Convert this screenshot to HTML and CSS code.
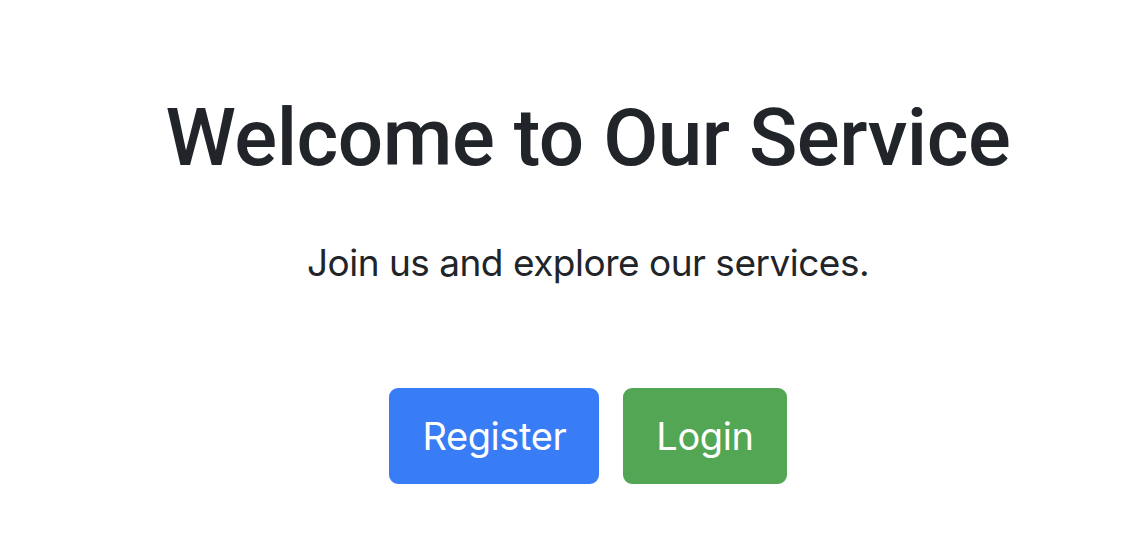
FILE: index.html
```html
<!DOCTYPE html>
<html lang="en">
<head>
<meta charset="utf-8">
<title>Welcome</title>
<link rel="stylesheet" href="styles.css">
</head>
<body>
<main class="hero">
  <h1 class="hero-title">Welcome to Our Service</h1>
  <p class="hero-lead">Join us and explore our services.</p>
  <div class="hero-actions">
    <a class="btn btn-primary" href="#">Register</a>
    <a class="btn btn-success" href="#">Login</a>
  </div>
</main>
</body>
</html>
```

FILE: styles.css
```css
html, body {
  margin: 0;
  padding: 0;
  background: #ffffff;
}
body {
  font-family: Inter, "Noto Sans", "Liberation Sans", sans-serif;
  color: #212529;
}
.hero {
  display: flex;
  flex-direction: column;
  align-items: center;
  padding: 90px 0 0 34px;
}
.hero-title {
  margin: 0;
  font-family: Roboto, "Liberation Sans", sans-serif;
  font-size: 80px;
  font-weight: 500;
  line-height: 96px;
  letter-spacing: -0.5px;
}
.hero-lead {
  margin: 49px 0 0;
  font-size: 37px;
  font-weight: 400;
  line-height: 56px;
  letter-spacing: -0.5px;
}
.hero-actions {
  display: flex;
  gap: 24px;
  margin-top: 97px;
}
.btn {
  display: inline-block;
  font-size: 38px;
  line-height: 60px;
  letter-spacing: -0.4px;
  padding: 16px 31px;
  border: 2px solid transparent;
  border-radius: 9px;
  color: #ffffff;
  text-decoration: none;
  font-weight: 400;
}
.btn-primary {
  background: #387cf6;
  border-color: #387cf6;
}
.btn-success {
  background: #53a653;
  border-color: #53a653;
}
```
